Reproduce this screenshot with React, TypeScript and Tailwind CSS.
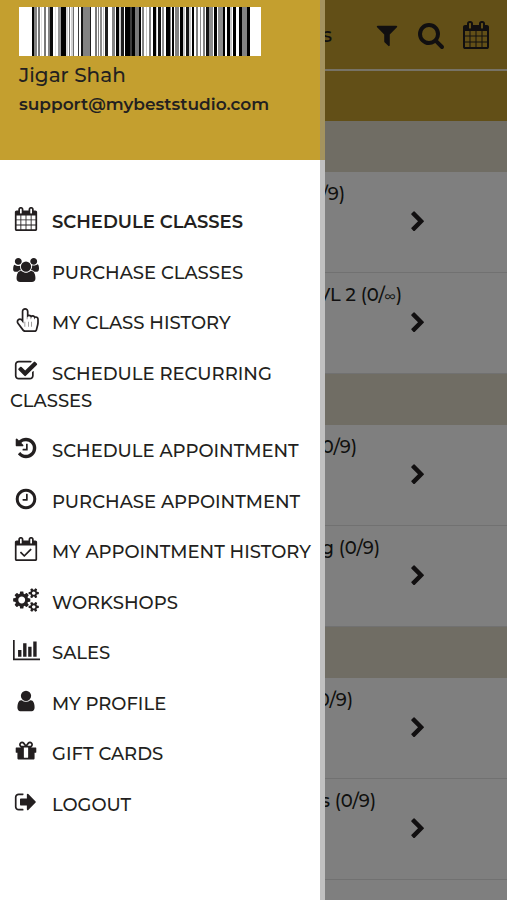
import React from 'react';

const ICONS = {
    filter: "M1595 295q17 41-14 70l-493 493v742q0 42-39 59-13 5-25 5-27 0-45-19l-256-256q-19-19-19-45v-486l-493-493q-31-29-14-70 17-39 59-39h1280q42 0 59 39z",
    search: "M1216 832q0-185-131.5-316.5t-316.5-131.5-316.5 131.5-131.5 316.5 131.5 316.5 316.5 131.5 316.5-131.5 131.5-316.5zm512 832q0 52-38 90t-90 38q-54 0-90-38l-343-342q-179 124-399 124-143 0-273.5-55.5t-225-150-150-225-55.5-273.5 55.5-273.5 150-225 225-150 273.5-55.5 273.5 55.5 225 150 150 225 55.5 273.5q0 220-124 399l343 343q37 37 37 90z",
    calendar: "M192 1664h288v-288h-288v288zm352 0h320v-288h-320v288zm-352-352h288v-320h-288v320zm352 0h320v-320h-320v320zm-352-384h288v-288h-288v288zm736 736h320v-288h-320v288zm-384-736h320v-288h-320v288zm768 736h288v-288h-288v288zm-384-352h320v-320h-320v320zm-352-864v-288q0-13-9.5-22.5t-22.5-9.5h-64q-13 0-22.5 9.5t-9.5 22.5v288q0 13 9.5 22.5t22.5 9.5h64q13 0 22.5-9.5t9.5-22.5zm736 864h288v-320h-288v320zm-384-384h320v-288h-320v288zm384 0h288v-288h-288v288zm32-480v-288q0-13-9.5-22.5t-22.5-9.5h-64q-13 0-22.5 9.5t-9.5 22.5v288q0 13 9.5 22.5t22.5 9.5h64q13 0 22.5-9.5t9.5-22.5zm384-64v1280q0 52-38 90t-90 38h-1408q-52 0-90-38t-38-90v-1280q0-52 38-90t90-38h128v-96q0-66 47-113t113-47h64q66 0 113 47t47 113v96h384v-96q0-66 47-113t113-47h64q66 0 113 47t47 113v96h128q52 0 90 38t38 90z",
    users: "M529 896q-162 5-265 128h-134q-82 0-138-40.5t-56-118.5q0-353 124-353 6 0 43.5 21t97.5 42.5 119 21.5q67 0 133-23-5 37-5 66 0 159 93 293zm1071 637q0 120-73 189.5t-194 69.5h-874q-121 0-194-69.5t-73-189.5q0-53 3.5-103.5t14-109 26.5-108.5 43-97.5 62-81 85.5-53.5 111.5-20q10 0 43 21.5t73 48 107 48 135 21.5 135-21.5 107-48 73-48 43-21.5q61 0 111.5 20t85.5 53.5 62 81 43 97.5 26.5 108.5 14 109 3.5 103.5zm-1024-1277q0 106-75 181t-181 75-181-75-75-181 75-181 181-75 181 75 75 181zm704 384q0 159-112.5 271.5t-271.5 112.5-271.5-112.5-112.5-271.5 112.5-271.5 271.5-112.5 271.5 112.5 112.5 271.5zm576 225q0 78-56 118.5t-138 40.5h-134q-103-123-265-128 93-134 93-293 0-29-5-66 66 23 133 23 59 0 119-21.5t97.5-42.5 43.5-21q124 0 124 353zm-128-609q0 106-75 181t-181 75-181-75-75-181 75-181 181-75 181 75 75 181z",
    hand: "M832 128q-53 0-90.5 37.5t-37.5 90.5v896l-151-202q-41-54-107-54-52 0-89 38t-37 90q0 43 26 77l384 512q38 51 102 51h718q22 0 39.5-13.5t22.5-34.5l92-368q24-96 24-194v-217q0-41-28-71t-68-30-68 28-28 68h-32v-61q0-48-32-81.5t-80-33.5q-46 0-79 33t-33 79v64h-32v-90q0-55-37-94.5t-91-39.5q-53 0-90.5 37.5t-37.5 90.5v96h-32v-570q0-55-37-94.5t-91-39.5zm0-128q107 0 181.5 77.5t74.5 185.5v220q22-2 32-2 99 0 173 69 47-21 99-21 113 0 184 87 27-7 56-7 94 0 159 67.5t65 161.5v217q0 116-28 225l-92 368q-16 64-68 104.5t-118 40.5h-718q-60 0-114.5-27.5t-90.5-74.5l-384-512q-51-68-51-154 0-105 74.5-180.5t179.5-75.5q71 0 130 35v-547q0-106 75-181t181-75zm0 1408v-384h-32v384h32zm256 0v-384h-32v384h32zm256 0v-384h-32v384h32z",
    check: "M1472 930v318q0 119-84.5 203.5t-203.5 84.5h-832q-119 0-203.5-84.5t-84.5-203.5v-832q0-119 84.5-203.5t203.5-84.5h832q63 0 117 25 15 7 18 23 3 17-9 29l-49 49q-10 10-23 10-3 0-9-2-23-6-45-6h-832q-66 0-113 47t-47 113v832q0 66 47 113t113 47h832q66 0 113-47t47-113v-254q0-13 9-22l64-64q10-10 23-10 6 0 12 3 20 8 20 29zm231-489l-814 814q-24 24-57 24t-57-24l-430-430q-24-24-24-57t24-57l110-110q24-24 57-24t57 24l263 263 647-647q24-24 57-24t57 24l110 110q24 24 24 57t-24 57z",
    history: "M1664 896q0 156-61 298t-164 245-245 164-298 61q-172 0-327-72.5t-264-204.5q-7-10-6.5-22.5t8.5-20.5l137-138q10-9 25-9 16 2 23 12 73 95 179 147t225 52q104 0 198.5-40.5t163.5-109.5 109.5-163.5 40.5-198.5-40.5-198.5-109.5-163.5-163.5-109.5-198.5-40.5q-98 0-188 35.5t-160 101.5l137 138q31 30 14 69-17 40-59 40h-448q-26 0-45-19t-19-45v-448q0-42 40-59 39-17 69 14l130 129q107-101 244.5-156.5t284.5-55.5q156 0 298 61t245 164 164 245 61 298zm-640-288v448q0 14-9 23t-23 9h-320q-14 0-23-9t-9-23v-64q0-14 9-23t23-9h224v-352q0-14 9-23t23-9h64q14 0 23 9t9 23z",
    clock: "M1024 544v448q0 14-9 23t-23 9h-320q-14 0-23-9t-9-23v-64q0-14 9-23t23-9h224v-352q0-14 9-23t23-9h64q14 0 23 9t9 23zm416 352q0-148-73-273t-198-198-273-73-273 73-198 198-73 273 73 273 198 198 273 73 273-73 198-198 73-273zm224 0q0 209-103 385.5t-279.5 279.5-385.5 103-385.5-103-279.5-279.5-103-385.5 103-385.5 279.5-279.5 385.5-103 385.5 103 279.5 279.5 103 385.5z",
    calendarCheck: "M1303 964l-512 512q-10 9-23 9t-23-9l-288-288q-9-10-9-23t9-22l46-46q9-9 22-9t23 9l220 220 444-444q10-9 23-9t22 9l46 46q9 9 9 22t-9 23zM192 1664h1408v-1024h-1408v1024zm384-1216v-288q0-13-9.5-22.5t-22.5-9.5h-64q-13 0-22.5 9.5t-9.5 22.5v288q0 13 9.5 22.5t22.5 9.5h64q13 0 22.5-9.5t9.5-22.5zm768 0v-288q0-13-9.5-22.5t-22.5-9.5h-64q-13 0-22.5 9.5t-9.5 22.5v288q0 13 9.5 22.5t22.5 9.5h64q13 0 22.5-9.5t9.5-22.5zm384-64v1280q0 52-38 90t-90 38h-1408q-52 0-90-38t-38-90v-1280q0-52 38-90t90-38h128v-96q0-66 47-113t113-47h64q66 0 113 47t47 113v96h384v-96q0-66 47-113t113-47h64q66 0 113 47t47 113v96h128q52 0 90 38t38 90z",
    cogs: "M832 896q0-106-75-181t-181-75-181 75-75 181 75 181 181 75 181-75 75-181zm768 512q0-52-38-90t-90-38-90 38-38 90q0 53 37.5 90.5t90.5 37.5 90.5-37.5 37.5-90.5zm0-1024q0-52-38-90t-90-38-90 38-38 90q0 53 37.5 90.5t90.5 37.5 90.5-37.5 37.5-90.5zm-384 421v185q0 10-7 19.5t-16 10.5l-155 24q-11 35-32 76 34 48 90 115 7 11 7 20 0 12-7 19-23 30-82.5 89.5t-78.5 59.5q-11 0-21-7l-115-90q-37 19-77 31-11 108-23 155-7 24-30 24h-186q-11 0-20-7.5t-10-17.5l-23-153q-34-10-75-31l-118 89q-7 7-20 7-11 0-21-8-144-133-144-160 0-9 7-19 10-14 41-53t47-61q-23-44-35-82l-152-24q-10-1-17-9.5t-7-19.5v-185q0-10 7-19.5t16-10.5l155-24q11-35 32-76-34-48-90-115-7-11-7-20 0-12 7-20 22-30 82-89t79-59q11 0 21 7l115 90q34-18 77-32 11-108 23-154 7-24 30-24h186q11 0 20 7.5t10 17.5l23 153q34 10 75 31l118-89q8-7 20-7 11 0 21 8 144 133 144 160 0 8-7 19-12 16-42 54t-45 60q23 48 34 82l152 23q10 2 17 10.5t7 19.5zm640 533v140q0 16-149 31-12 27-30 52 51 113 51 138 0 4-4 7-122 71-124 71-8 0-46-47t-52-68q-20 2-30 2t-30-2q-14 21-52 68t-46 47q-2 0-124-71-4-3-4-7 0-25 51-138-18-25-30-52-149-15-149-31v-140q0-16 149-31 13-29 30-52-51-113-51-138 0-4 4-7 4-2 35-20t59-34 30-16q8 0 46 46.5t52 67.5q20-2 30-2t30 2q51-71 92-112l6-2q4 0 124 70 4 3 4 7 0 25-51 138 17 23 30 52 149 15 149 31zm0-1024v140q0 16-149 31-12 27-30 52 51 113 51 138 0 4-4 7-122 71-124 71-8 0-46-47t-52-68q-20 2-30 2t-30-2q-14 21-52 68t-46 47q-2 0-124-71-4-3-4-7 0-25 51-138-18-25-30-52-149-15-149-31v-140q0-16 149-31 13-29 30-52-51-113-51-138 0-4 4-7 4-2 35-20t59-34 30-16q8 0 46 46.5t52 67.5q20-2 30-2t30 2q51-71 92-112l6-2q4 0 124 70 4 3 4 7 0 25-51 138 17 23 30 52 149 15 149 31z",
    chart: "M640 896v512h-256v-512h256zm384-512v1024h-256v-1024h256zm1024 1152v128h-2048v-1536h128v1408h1920zm-640-896v768h-256v-768h256zm384-384v1152h-256v-1152h256z",
    user: "M1536 1399q0 109-62.5 187t-150.5 78h-854q-88 0-150.5-78t-62.5-187q0-85 8.5-160.5t31.5-152 58.5-131 94-89 134.5-34.5q131 128 313 128t313-128q76 0 134.5 34.5t94 89 58.5 131 31.5 152 8.5 160.5zm-256-887q0 159-112.5 271.5t-271.5 112.5-271.5-112.5-112.5-271.5 112.5-271.5 271.5-112.5 271.5 112.5 112.5 271.5z",
    gift: "M1056 1356v-716h-320v716q0 25 18 38.5t46 13.5h192q28 0 46-13.5t18-38.5zm-456-844h195l-126-161q-26-31-69-31-40 0-68 28t-28 68 28 68 68 28zm688-96q0-40-28-68t-68-28q-43 0-69 31l-125 161h194q40 0 68-28t28-68zm376 256v320q0 14-9 23t-23 9h-96v416q0 40-28 68t-68 28h-1088q-40 0-68-28t-28-68v-416h-96q-14 0-23-9t-9-23v-320q0-14 9-23t23-9h440q-93 0-158.5-65.5t-65.5-158.5 65.5-158.5 158.5-65.5q107 0 168 77l128 165 128-165q61-77 168-77 93 0 158.5 65.5t65.5 158.5-65.5 158.5-158.5 65.5h440q14 0 23 9t9 23z",
    signOut: "M704 1440q0 4 1 20t.5 26.5-3 23.5-10 19.5-20.5 6.5h-320q-119 0-203.5-84.5t-84.5-203.5v-704q0-119 84.5-203.5t203.5-84.5h320q13 0 22.5 9.5t9.5 22.5q0 4 1 20t.5 26.5-3 23.5-10 19.5-20.5 6.5h-320q-66 0-113 47t-47 113v704q0 66 47 113t113 47h312l11.5 1 11.5 3 8 5.5 7 9 2 13.5zm928-544q0 26-19 45l-544 544q-19 19-45 19t-45-19-19-45v-288h-448q-26 0-45-19t-19-45v-384q0-26 19-45t45-19h448v-288q0-26 19-45t45-19 45 19l544 544q19 19 19 45z",
    chevron: "M1363 877l-742 742q-19 19-45 19t-45-19l-166-166q-19-19-19-45t19-45l531-531-531-531q-19-19-19-45t19-45l166-166q19-19 45-19t45 19l742 742q19 19 19 45t-19 45z",
};

type IconName = keyof typeof ICONS;

function Icon({ name, className }: { name: IconName; className: string }) {
    // the bar chart glyph is wider than the others
    const viewBox = name === 'chart' ? '0 0 2048 1792' : '0 0 1792 1792';
    return (
        <svg viewBox={viewBox} className={`overflow-visible ${className}`} fill="currentColor" aria-hidden="true">
            <path d={ICONS[name]} />
        </svg>
    );
}

// [x, width, grey level]
const BARS = [
    [13, 2, 0], [15, 3, 130], [19, 2, 120], [22, 1, 225], [25, 2, 120], [29, 2, 130], [31, 3, 10],
    [36, 1, 225], [39, 3, 150], [42, 5, 0], [47, 2, 215], [50, 1, 110], [52, 2, 210], [54, 1, 110],
    [59, 1, 60], [62, 2, 20], [64, 7, 130], [71, 1, 30], [76, 2, 120], [79, 1, 130], [81, 2, 140],
    [84, 1, 200], [86, 3, 30], [93, 3, 130], [97, 3, 0], [100, 2, 200], [102, 3, 30], [106, 5, 0],
    [111, 2, 60], [113, 3, 0], [116, 4, 120], [120, 2, 0], [123, 2, 130], [127, 1, 200], [130, 2, 130],
    [134, 3, 0], [137, 1, 200], [139, 3, 20], [143, 2, 140], [147, 4, 0], [151, 1, 130], [153, 2, 0],
    [156, 4, 130], [161, 3, 0], [164, 2, 200], [167, 3, 20], [170, 2, 200], [173, 2, 0], [177, 2, 130],
    [181, 1, 140], [184, 2, 130], [187, 3, 20], [190, 4, 140], [195, 3, 0], [199, 5, 140], [204, 2, 0],
    [208, 3, 0], [211, 2, 200], [214, 3, 0], [220, 3, 0], [223, 5, 130], [228, 3, 0],
];

const MENU: { label: string; icon: IconName; active?: boolean }[] = [
    { label: 'SCHEDULE CLASSES', icon: 'calendar', active: true },
    { label: 'PURCHASE CLASSES', icon: 'users' },
    { label: 'MY CLASS HISTORY', icon: 'hand' },
    { label: 'SCHEDULE RECURRING CLASSES', icon: 'check' },
    { label: 'SCHEDULE APPOINTMENT', icon: 'history' },
    { label: 'PURCHASE APPOINTMENT', icon: 'clock' },
    { label: 'MY APPOINTMENT HISTORY', icon: 'calendarCheck' },
    { label: 'WORKSHOPS', icon: 'cogs' },
    { label: 'SALES', icon: 'chart' },
    { label: 'MY PROFILE', icon: 'user' },
    { label: 'GIFT CARDS', icon: 'gift' },
    { label: 'LOGOUT', icon: 'signOut' },
];

const DAYS = [
    [{ name: '(0/9)', pad: 'pr-[62px]' }, { name: 'LVL 2 (0/∞)', pad: 'pr-[5px]' }],
    [{ name: '(0/9)', pad: 'pr-[50px]' }, { name: 'g (0/9)', pad: 'pr-[27px]' }],
    [{ name: '(0/9)', pad: 'pr-[54px]' }, { name: 's (0/9)', pad: 'pr-[31px]' }],
];

function Barcode() {
    return (
        <svg viewBox="0 0 242 49" className="block w-[242px] h-[49px]" role="img" aria-label="Member barcode">
            <rect width="242" height="49" fill="#fff" />
            {BARS.map(([x, w, g]) => (
                <rect key={x} x={x} width={w} height="49" fill={`rgb(${g},${g},${g})`} />
            ))}
        </svg>
    );
}

// the infinity sign is set smaller than the digits around it
function ClassName({ name }: { name: string }) {
    const [before, after] = name.split('∞');
    if (after === undefined) return <>{name}</>;
    return <>{before}<span className="text-xs">∞</span>{after}</>;
}

function SchedulePage() {
    return (
        <main>
            <header className="flex h-[71px] items-center border-b-2 border-[#efe6cc] bg-[#c49f2f] pr-[17px]">
                <h1 className="flex-1 pr-[42px] text-right text-xl font-medium">Classes</h1>
                <div className="flex items-center gap-[17px]">
                    <button type="button" aria-label="Filter"><Icon name="filter" className="block size-[26px]" /></button>
                    <button type="button" aria-label="Search"><Icon name="search" className="block size-[28px]" /></button>
                    <button type="button" aria-label="Calendar"><Icon name="calendar" className="block size-[28px]" /></button>
                </div>
            </header>
            <div className="h-[50px] bg-[#c49f2f]" />
            {DAYS.map((classes, i) => (
                <section key={i}>
                    <div className="h-[51px] bg-[#e0dbc9]" />
                    {classes.map((item) => (
                        <a key={item.name} href="#class" className="flex h-[101px] items-center border-b border-[#e2e2e2] pr-[78px]">
                            <span className={`flex-1 self-start pt-[8px] text-right text-lg leading-[28px] font-medium ${item.pad}`}>
                                <ClassName name={item.name} />
                            </span>
                            <Icon name="chevron" className="size-[22px]" />
                        </a>
                    ))}
                </section>
            ))}
        </main>
    );
}

function Drawer() {
    return (
        <aside className="absolute inset-y-0 left-0 w-[325px] bg-white">
            <div className="h-[160px] bg-[#c49f2f] pl-[19px] pt-[7px]">
                <Barcode />
                <p className="pt-[5px] text-xl leading-[28px] font-medium">Jigar Shah</p>
                <p className="text-[17px] leading-[30px] font-semibold">support@mybeststudio.com</p>
            </div>
            <nav className="pt-[47px]">
                <ul className="flex min-h-[612px] flex-col justify-between">
                    {MENU.map((item) => (
                        <li key={item.label}>
                            <a href="#menu" className={`block pl-[10px] text-lg leading-[27px] ${item.active ? 'font-semibold' : 'font-medium'}`}>
                                <span className="mr-[10px] inline-flex w-[32px] justify-center align-[-3px]">
                                    <Icon name={item.icon} className={item.icon === 'chart' ? 'h-[24px] w-[27px]' : 'size-[24px]'} />
                                </span>
                                {item.label}
                            </a>
                        </li>
                    ))}
                </ul>
            </nav>
            {/* drawer edge */}
            <div className="absolute inset-y-0 right-0 w-[5px] bg-[#888888]/53" />
        </aside>
    );
}

export default function App() {
    return (
        <div className="relative min-h-screen overflow-hidden bg-white font-['Montserrat','Inter',sans-serif] text-[#231f20]">
            <SchedulePage />
            <div className="absolute inset-0 bg-black/50" />
            <Drawer />
        </div>
    );
}
